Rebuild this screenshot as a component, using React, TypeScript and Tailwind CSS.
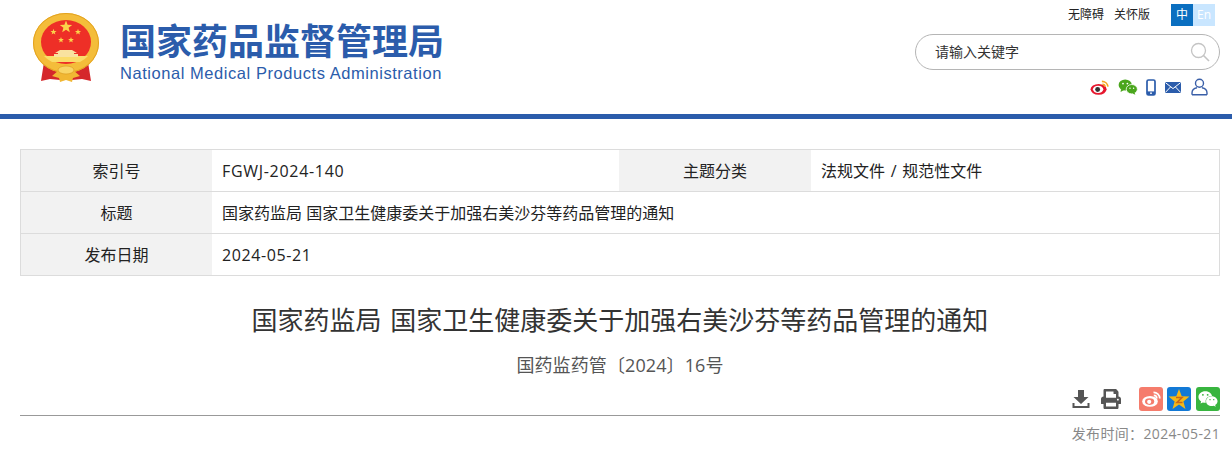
import React from 'react'
import { FaWeixin, FaPrint } from 'react-icons/fa'

const CN = "font-['Open_Sans','Noto_Sans_CJK_SC',sans-serif]"

function Star({ x, y, r, fill = '#fbd34a' }: { x: number; y: number; r: number; fill?: string }) {
  const pts = Array.from({ length: 10 }, (_, i) => {
    const a = -Math.PI / 2 + (i * Math.PI) / 5
    const d = i % 2 === 0 ? r : r * 0.42
    return `${(x + d * Math.cos(a)).toFixed(2)},${(y + d * Math.sin(a)).toFixed(2)}`
  }).join(' ')
  return <polygon points={pts} fill={fill} />
}

function Emblem() {
  return (
    <svg width="66" height="70" viewBox="33 12 66 70" className="shrink-0">
      <path d="M44 62 L52 66 L62 76 L60 80 L50 79 L41 81 Z" fill="#d5272b" />
      <path d="M88 62 L80 66 L70 76 L72 80 L82 79 L91 81 Z" fill="#d5272b" />
      <ellipse cx="66" cy="43" rx="33" ry="30" fill="#f4bd3a" />
      <ellipse cx="66" cy="43" rx="32.5" ry="29.5" fill="none" stroke="#e3a21f" strokeWidth="1" />
      <ellipse cx="66" cy="42" rx="25" ry="22" fill="#ee2f27" />
      <Star x={66} y={27} r={6.5} />
      <Star x={53.5} y={32} r={3.2} />
      <Star x={78} y={32} r={3.2} />
      <Star x={61} y={40} r={3} />
      <Star x={71} y={40} r={3} />
      <path d="M44 56 H88 A25 22 0 0 1 80 62 H52 A25 22 0 0 1 44 56 Z" fill="#fbdc6a" />
      <path d="M55 53 L60 50 H72 L77 53 L74 53 V54 H78 V57 H54 V54 H58 V53 Z" fill="#f9e2a0" />
      <path d="M52 76 L59 70 H73 L80 76 L73 78 L72 82 L66 80 L60 82 L59 78 Z" fill="#f1b733" />
      <ellipse cx="66" cy="70" rx="8" ry="4" fill="#f9d566" stroke="#d9971c" strokeWidth="0.6" />
    </svg>
  )
}

function TopIcons() {
  return (
    <div className="mt-[8px] mr-[12px] flex items-center justify-end">
      <svg width="20" height="16" viewBox="0 0 20 17">
        <ellipse cx="8.5" cy="11" rx="8.5" ry="5.8" fill="#e6162d" />
        <ellipse cx="8" cy="11" rx="5.5" ry="3.8" fill="#fff" />
        <circle cx="7.5" cy="11.2" r="2.6" fill="#333" />
        <path d="M12 2.5 A6.5 6.5 0 0 1 18.5 8" fill="none" stroke="#f5a623" strokeWidth="1.8" />
        <path d="M12.5 5.6 A3 3 0 0 1 15.5 8.4" fill="none" stroke="#f5a623" strokeWidth="1.5" />
      </svg>
      <svg width="20" height="16" viewBox="0 0 20 16" className="ml-[8px]">
        <ellipse cx="7.2" cy="6" rx="6.6" ry="5.6" fill="#4aa61d" />
        <path d="M3 10 L2.6 13 L6 11 Z" fill="#4aa61d" />
        <ellipse cx="13.8" cy="10.2" rx="5.6" ry="4.7" fill="#4aa61d" stroke="#fff" strokeWidth="0.8" />
        <path d="M16.5 13.5 L17.4 15.8 L14.5 14.6 Z" fill="#4aa61d" />
        <circle cx="5" cy="4.6" r="0.9" fill="#fff" />
        <circle cx="9.4" cy="4.6" r="0.9" fill="#fff" />
        <circle cx="12" cy="9.2" r="0.7" fill="#fff" />
        <circle cx="15.6" cy="9.2" r="0.7" fill="#fff" />
      </svg>
      <svg width="10" height="17" viewBox="0 0 10 17" className="ml-[8px]">
        <rect x="1" y="1" width="8" height="15" rx="1.5" fill="none" stroke="#2b5cab" strokeWidth="1.7" />
        <rect x="1" y="12.4" width="8" height="3.6" fill="#2b5cab" />
        <circle cx="5" cy="14.2" r="0.9" fill="#fff" />
      </svg>
      <svg width="16" height="11" viewBox="0 0 16 11" className="ml-[9px]">
        <rect width="16" height="11" rx="1" fill="#2b5cab" />
        <path d="M0.5 0.7 L8 6.6 L15.5 0.7 M0.5 10.3 L5.6 4.9 M15.5 10.3 L10.4 4.9" fill="none" stroke="#fff" strokeWidth="1" />
      </svg>
      <svg width="17" height="18" viewBox="0 0 17 18" className="ml-[10px]">
        <circle cx="8.5" cy="5.2" r="4" fill="none" stroke="#3a5fa8" strokeWidth="1.4" />
        <path d="M1 16.8 V15 C1 11.8 4 10.2 6 9.8 M16 16.8 V15 C16 11.8 13 10.2 11 9.8 M1 16.8 H16" fill="none" stroke="#3a5fa8" strokeWidth="1.4" />
      </svg>
    </div>
  )
}

function Header() {
  return (
    <header className="flex h-[119px] justify-between border-b-[5px] border-[#2b5cab]">
      <div className="flex pt-[12px] pl-[33px]">
        <Emblem />
        <div className="ml-[21px] mt-[6px] w-[324px]">
          <div className="font-['Noto_Sans_CJK_SC',sans-serif] text-[36px] leading-[42px] font-bold text-[#2b5cab] whitespace-nowrap">国家药品监督管理局</div>
          <div className="mt-[3px] font-['Liberation_Sans',sans-serif] text-[16.5px] leading-[20px] tracking-[0.55px] text-[#2b5cab] whitespace-nowrap">National Medical Products Administration</div>
        </div>
      </div>
      <div className={`${CN} w-[305px] mr-[12px] pt-[4px]`}>
        <div className="flex h-[22px] items-center justify-end pr-[5px] text-[12px] text-[#222]">
          <span>无障碍</span>
          <span className="ml-[10px]">关怀版</span>
          <div className="ml-[21px] flex text-[12px] text-white">
            <span className="flex h-[22px] w-[22px] items-center justify-center bg-[#0b6fc0]">中</span>
            <span className="flex h-[22px] w-[22px] items-center justify-center bg-[#c9e6ff]">En</span>
          </div>
        </div>
        <div className="mt-[8px] flex h-[36px] items-center justify-between rounded-full border border-[#b5b5b5] pr-[9px] pl-[19px] text-[14px] text-[#333]">
          <span className="pb-[2px]">请输入关键字</span>
          <svg width="20" height="20" viewBox="0 0 20 20">
            <circle cx="8.5" cy="8.5" r="7" fill="none" stroke="#c4c4c4" strokeWidth="1.3" />
            <path d="M13.5 13.5 L19 19" stroke="#c4c4c4" strokeWidth="1.6" />
          </svg>
        </div>
        <TopIcons />
      </div>
    </header>
  )
}

function Label({ children, wide }: { children: React.ReactNode; wide?: boolean }) {
  return <div className={`flex shrink-0 items-center justify-center bg-[#f2f2f2] ${wide ? 'w-[192px]' : 'w-[191px]'}`}>{children}</div>
}

function InfoTable() {
  return (
    <div className={`${CN} ml-[20px] mr-[12px] mt-[30px] border border-[#dcdcdc] text-[16px] text-[#222]`}>
      <div className="flex h-[42px] border-b border-[#dcdcdc]">
        <Label>索引号</Label>
        <div className="flex w-[407px] items-center pl-[10px] tracking-[0.7px]">FGWJ-2024-140</div>
        <Label wide>主题分类</Label>
        <div className="flex flex-1 items-center pl-[10px] [word-spacing:1.5px]">法规文件 / 规范性文件</div>
      </div>
      <div className="flex h-[42px] border-b border-[#dcdcdc]">
        <Label>标题</Label>
        <div className="flex flex-1 items-center pl-[10px]">国家药监局 国家卫生健康委关于加强右美沙芬等药品管理的通知</div>
      </div>
      <div className="flex h-[41px]">
        <Label>发布日期</Label>
        <div className="flex flex-1 items-center pl-[10px] tracking-[0.6px]">2024-05-21</div>
      </div>
    </div>
  )
}

function ShareBar() {
  return (
    <div className="flex h-[24px] items-center justify-end">
      <svg width="18" height="19" viewBox="0 0 18 19" className="text-[#555]">
        <path d="M6 0 H12 V7 H16.5 L9 14 L1.5 7 H6 Z" fill="currentColor" />
        <path d="M0.5 13 V18 H17.5 V13 H15.5 V16 H2.5 V13 Z" fill="currentColor" />
      </svg>
      <FaPrint className="ml-[11px] text-[20px] text-[#555]" />
      <span className="ml-[18px] flex h-[24px] w-[24px] items-center justify-center rounded-[3px] bg-[#f57c6c]">
        <svg width="19" height="16" viewBox="0 0 19 16">
          <ellipse cx="8" cy="10.4" rx="7.8" ry="5.4" fill="#fff" />
          <ellipse cx="7.6" cy="10.6" rx="4.6" ry="3.3" fill="#f57c6c" />
          <circle cx="7.2" cy="10.8" r="2.1" fill="#fff" />
          <path d="M11.5 1.4 A6.2 6.2 0 0 1 17.8 7.6 M11.8 4.4 A3 3 0 0 1 14.8 7.4" fill="none" stroke="#fff" strokeWidth="1.7" />
        </svg>
      </span>
      <span className="ml-[4px] flex h-[24px] w-[24px] items-center justify-center rounded-[3px] bg-[#1279d6]">
        <svg width="22" height="21" viewBox="0 0 22 21">
          <Star x={11} y={11} r={11} fill="#f5b816" />
          <path d="M8 8.5 H14 L9 13.5 H14.5" fill="none" stroke="#c8651a" strokeWidth="1.6" />
        </svg>
      </span>
      <span className="ml-[5px] flex h-[24px] w-[24px] items-center justify-center rounded-[3px] bg-[#38b53f]">
        <FaWeixin className="text-[20px] text-white" />
      </span>
    </div>
  )
}

export default function App() {
  return (
    <div className="h-[451px] w-[1232px] overflow-hidden bg-white">
      <Header />
      <InfoTable />
      <div className={`${CN} ml-[20px] mr-[12px] text-center`}>
        <h1 className="mt-[26px] text-[26px] leading-[36px] font-normal text-[#333] [word-spacing:2px]">国家药监局 国家卫生健康委关于加强右美沙芬等药品管理的通知</h1>
        <p className="mt-[14px] text-[18px] leading-[26px] tracking-[0.1px] text-[#555]">国药监药管〔2024〕16号</p>
        <div className="mt-[9px] border-b border-[#999] pb-[4px]">
          <ShareBar />
        </div>
        <p className="mt-[8px] text-right text-[14px] leading-[20px] tracking-[0.35px] text-[#888]">发布时间：2024-05-21</p>
      </div>
    </div>
  )
}
